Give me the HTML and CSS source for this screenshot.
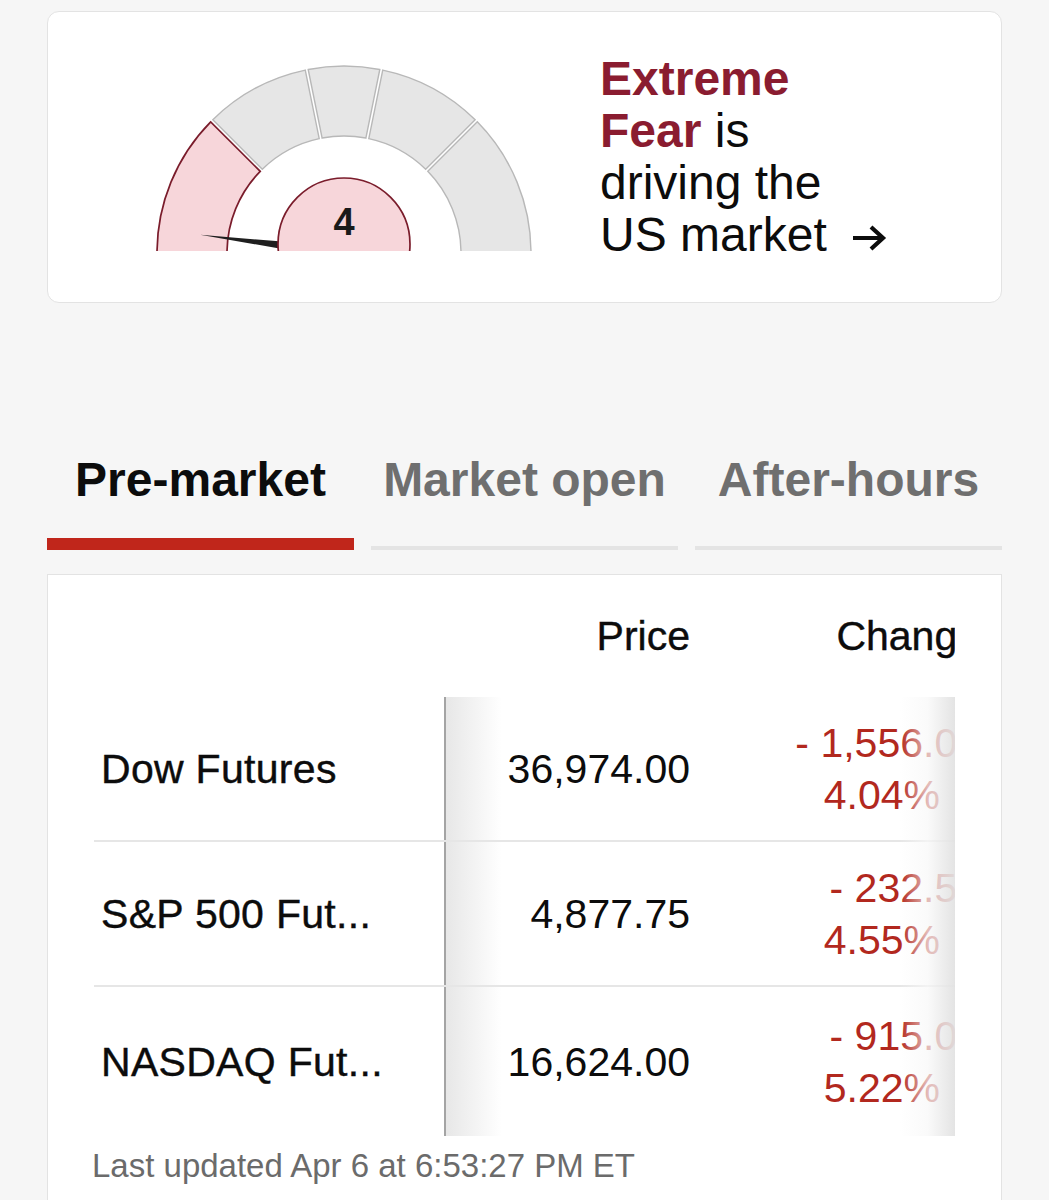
FILE: index.html
```html
<!DOCTYPE html>
<html lang="en">
<head>
  <meta charset="UTF-8">
  <title>Markets</title>
  <link rel="stylesheet" href="styles.css">
</head>
<body>
  <div class="page">
    <div class="fg-card">
      <svg class="gauge" width="380" height="188" viewBox="0 0 380 188">
        <path class="seg on" d="M3 190 A187 187 0 0 1 56.71 58.84 L106.22 108.33 A117 117 0 0 0 73 190 Z"/>
        <path class="seg" d="M58.84 56.71 A187 187 0 0 1 151.25 7.06 L165.22 75.65 A117 117 0 0 0 108.33 106.22 Z"/>
        <path class="seg" d="M154.19 6.46 A187 187 0 0 1 225.81 6.46 L211.86 75.06 A117 117 0 0 0 168.14 75.06 Z"/>
        <path class="seg" d="M228.75 7.06 A187 187 0 0 1 321.16 56.71 L271.67 106.22 A117 117 0 0 0 214.78 75.65 Z"/>
        <path class="seg" d="M323.29 58.84 A187 187 0 0 1 377 190 L307 190 A117 117 0 0 0 273.78 108.33 Z"/>
        <polygon class="needle" points="46.1,171.8 131.0,178.8 129.8,186.2"/>
        <circle class="dial" cx="190" cy="181" r="66"/>
        <text class="dial-num" x="190" y="172" text-anchor="middle">4</text>
      </svg>
      <p class="fg-text"><strong>Extreme</strong><br><strong>Fear</strong> is<br>driving the<br>US market<svg class="arrow" width="36" height="28" viewBox="0 0 36 28"><path d="M2 14 H32 M20 3 L32 14 L20 25"/></svg></p>
    </div>

    <div class="tabs">
      <div class="tab active"><span class="label">Pre-market</span><div class="bar-wrap"><div class="bar"></div></div></div>
      <div class="tab"><span class="label">Market open</span><div class="bar-wrap"><div class="bar"></div></div></div>
      <div class="tab"><span class="label">After-hours</span><div class="bar-wrap"><div class="bar"></div></div></div>
    </div>

    <div class="markets">
      <div class="scroll">
        <div class="row head">
          <div></div>
          <div class="price">Price</div>
          <div class="chg">Change</div>
        </div>
        <div class="body">
          <div class="row line">
            <div class="name">Dow Futures</div>
            <div class="price">36,974.00</div>
            <div class="chg down"><div>- 1,556.00</div><div class="pct">4.04%</div></div>
          </div>
          <div class="row line">
            <div class="name">S&amp;P 500 Fut...</div>
            <div class="price">4,877.75</div>
            <div class="chg down"><div>- 232.50</div><div class="pct">4.55%</div></div>
          </div>
          <div class="row last">
            <div class="name">NASDAQ Fut...</div>
            <div class="price">16,624.00</div>
            <div class="chg down"><div>- 915.00</div><div class="pct">5.22%</div></div>
          </div>
        </div>
      </div>
      <p class="updated">Last updated Apr 6 at 6:53:27 PM ET</p>
    </div>
  </div>
</body>
</html>
```

FILE: styles.css
```css
body {
  margin: 0;
  background-color: #f6f6f6;
  font-family: "Liberation Sans", Arial, sans-serif;
  color: #0c0c0c;
}
.page {
  padding: 11px 47px 0 47px;
}
.fg-card {
  display: flex;
  align-items: center;
  gap: 66px;
  background: #fff;
  border: 1px solid #e3e3e3;
  border-radius: 12px;
  padding: 41px 0 41px 106px;
}
.gauge {
  display: block;
  flex: none;
}
.seg {
  fill: #e6e6e6;
  stroke: #b8b8b8;
  stroke-width: 1.4;
}
.seg.on {
  fill: #f7d6da;
  stroke: #7a1c2b;
  stroke-width: 1.7;
}
.needle {
  fill: #1f1f1f;
}
.dial {
  fill: #f7d6da;
  stroke: #7a1c2b;
  stroke-width: 1.7;
}
.dial-num {
  font-family: "Liberation Sans", Arial, sans-serif;
  font-weight: bold;
  font-size: 38px;
  fill: #1a1a1a;
}
.fg-text {
  margin: 0;
  font-size: 48px;
  line-height: 52px;
  white-space: nowrap;
}
.fg-text strong {
  color: #8a1c30;
}
.arrow {
  margin-left: 24px;
  vertical-align: middle;
}
.arrow path {
  fill: none;
  stroke: #0c0c0c;
  stroke-width: 4.2;
}
.tabs {
  display: flex;
  gap: 17px;
  margin-top: 149px;
}
.tab {
  flex: 1;
  display: flex;
  flex-direction: column;
  text-align: center;
}
.tab .label {
  font-size: 48px;
  line-height: 56px;
  font-weight: bold;
  color: #6f6f6f;
}
.tab.active .label {
  color: #0c0c0c;
}
.bar-wrap {
  height: 12px;
  margin-top: 30px;
  display: flex;
  align-items: flex-end;
}
.bar {
  flex: 1;
  height: 4px;
  background: #e4e4e4;
}
.tab.active .bar {
  height: 12px;
  background: #c0261b;
}
.markets {
  margin-top: 24px;
  background: #fff;
  border: 1px solid #e3e3e3;
  padding: 0 46px 40px 46px;
}
.scroll {
  overflow: hidden;
}
.row {
  display: grid;
  grid-template-columns: 350px 246px 290px;
  width: 886px;
  align-items: center;
  font-size: 41px;
  line-height: 52px;
}
.head {
  height: 122px;
  -webkit-text-stroke: 0.4px #0c0c0c;
}
.price {
  text-align: right;
}
.chg {
  text-align: right;
}
.body {
  position: relative;
  background: linear-gradient(90deg, #a4a4a4 0, #a4a4a4 2px, #e7e7e7 2px, #fff 58px) no-repeat 350px 0 / 60px 100%;
}
.body::after {
  content: "";
  position: absolute;
  top: 0;
  bottom: 0;
  left: 806px;
  width: 55px;
  background: linear-gradient(90deg, rgba(255,255,255,0) 0, rgba(248,248,248,0.7) 50%, rgba(226,226,226,0.95) 100%);
}
.line {
  height: 145px;
  box-sizing: border-box;
  border-bottom: 2px solid #e6e6e6;
}
.last {
  height: 149px;
}
.name {
  padding-left: 7px;
  letter-spacing: 0.3px;
  -webkit-text-stroke: 0.4px #0c0c0c;
}
.down {
  color: #b2281e;
}
.pct {
  padding-right: 40px;
}
.updated {
  margin: 10px 0 0 -2px;
  font-size: 33px;
  line-height: 40px;
  color: #6b6b6b;
}
```
